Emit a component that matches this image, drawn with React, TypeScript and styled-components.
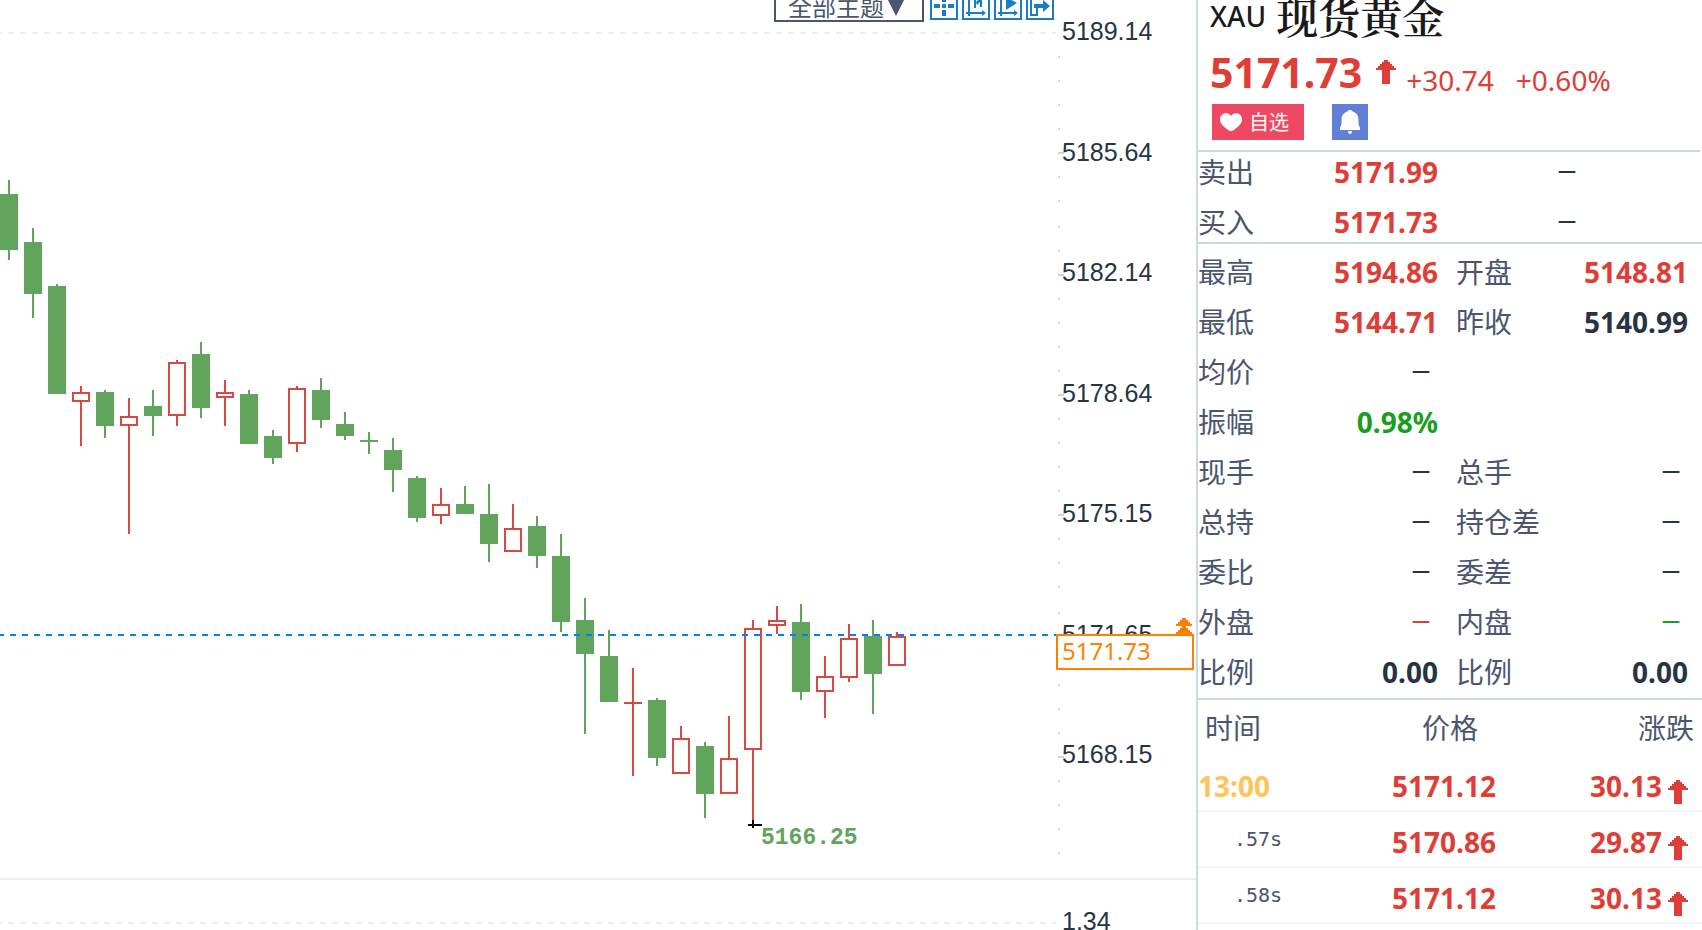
import React from 'react';
import styled, { createGlobalStyle } from 'styled-components';

const color = {
  ink: '#263444',
  label: '#4a5670',
  rule: '#cdd7df',
  faint: '#eaeff4',
  row: '#f4f5f6',
  up: '#de3e35',
  down: '#199e22',
  candleUp: '#d64a42',
  candleDown: '#61a55d',
  accent: '#ff8000',
  tool: '#1a7cc9',
};

const cjk = '"Noto Sans CJK SC", sans-serif';
const numeric = '"Noto Sans", "Noto Sans CJK SC", sans-serif';

const GlobalStyle = createGlobalStyle`
  *, *::before, *::after { box-sizing: border-box; }
  body { margin: 0; background: #fff; color: ${color.ink}; font-family: ${numeric}; }
`;

const Page = styled.main`
  display: grid;
  grid-template-columns: minmax(0, 1fr) 506px;
  height: 100vh;
  overflow: hidden;
`;

/* ---------- chart ---------- */

const ChartArea = styled.section`
  display: flex;
  flex-direction: column;
  min-height: 0;
`;

const MainPane = styled.div`
  display: grid;
  grid-template-columns: minmax(0, 1fr) 140px;
  flex: none;
  height: 880px;
  border-bottom: 2px solid ${color.faint};
`;

const SubPane = styled.div`
  display: grid;
  grid-template-columns: minmax(0, 1fr) 140px;
  flex: none;
  height: 86px;
`;

const Plot = styled.div`
  position: relative;
  min-width: 0;
`;

const Canvas = styled.svg`
  display: block;
  width: 100%;
  height: 100%;
  shape-rendering: crispEdges;
`;

const LowLabel = styled.text`
  font: 700 23px "Liberation Mono", monospace;
  fill: ${color.candleDown};
`;

const Toolbar = styled.div`
  position: absolute;
  top: -10px;
  right: 2px;
  display: flex;
  align-items: center;
  gap: 4px;
`;

const ThemePicker = styled.label`
  position: relative;
  display: block;
  margin-right: 2px;
`;

const ThemeSelect = styled.select`
  appearance: none;
  display: block;
  width: 150px;
  height: 32px;
  padding: 0 0 0 12px;
  border: 2px solid ${color.label};
  border-radius: 0;
  background: #fff;
  color: ${color.label};
  font: 400 24px/28px ${cjk};
`;

const Caret = styled.svg`
  position: absolute;
  right: 18px;
  top: 6px;
  pointer-events: none;
`;

const ToolButton = styled.button`
  display: block;
  width: 28px;
  height: 28px;
  padding: 0;
  border: 2px solid ${color.tool};
  background: #fff;
  color: ${color.tool};
  svg { display: block; }
`;

const Axis = styled.div`
  position: relative;
  display: grid;
  grid-template-columns: 6px 1fr;
`;

const AxisLabels = styled.ol`
  display: flex;
  flex-direction: column;
  justify-content: space-between;
  height: 753px;
  margin: 16px 0 0;
  padding: 0;
  list-style: none;
`;

const AxisLabel = styled.li`
  height: 30px;
  font: 25px/30px "Liberation Sans", sans-serif;
`;

const SubLabel = styled.div`
  padding: 26px 0 0 6px;
  font: 25px/30px "Liberation Sans", sans-serif;
`;

const PriceMarker = styled.div`
  position: absolute;
  top: 618px;
  left: 0;
  right: 2px;
  display: flex;
  flex-direction: column;
  align-items: flex-end;
  svg { display: block; margin-right: 2px; }
`;

const PriceTag = styled.div`
  width: 100%;
  height: 36px;
  padding-left: 4px;
  border: 2px solid ${color.accent};
  background: #fff;
  color: ${color.accent};
  font: 24px/30px ${numeric};
`;

/* ---------- quote panel ---------- */

const Panel = styled.aside`
  display: flex;
  flex-direction: column;
  border-left: 2px solid ${color.rule};
  min-height: 0;
`;

const Summary = styled.header`
  flex: none;
  height: 152px;
  margin-right: 2px;
  padding-left: 12px;
  border-bottom: 2px solid ${color.rule};
`;

const TitleRow = styled.h1`
  display: flex;
  align-items: center;
  gap: 10px;
  height: 36px;
  margin: 0;
  padding-bottom: 4px;
  color: #1a1a1a;
`;

const Ticker = styled.span`
  font: 500 28px/36px ${numeric};
`;

const Name = styled.span`
  font: 600 42px/36px "Noto Serif CJK SC", SimSun, ${cjk};
`;

const PriceRow = styled.div`
  display: flex;
  align-items: center;
  height: 68px;
  padding-top: 4px;
  color: ${color.up};
`;

const Price = styled.strong`
  margin-right: 14px;
  font: 700 41px/60px ${numeric};
`;

const Change = styled.span`
  margin-left: 22px;
  padding-top: 16px;
  font: 28px/28px ${numeric};
  &:first-of-type { margin-left: 10px; }
`;

const Actions = styled.div`
  display: flex;
  gap: 28px;
  padding-left: 2px;
`;

const ActionButton = styled.button<{ $fill: string; $width: number }>`
  display: flex;
  align-items: center;
  gap: 7px;
  width: ${(p) => p.$width}px;
  height: 36px;
  padding: 0 8px;
  border: 0;
  background: ${(p) => p.$fill};
  color: #fff;
  font: 20px/36px ${cjk};
  svg { flex: none; }
`;

const Section = styled.dl<{ $top?: number; $bottom?: number }>`
  display: flex;
  flex: none;
  flex-direction: column;
  gap: 10px;
  margin: 0;
  padding: ${(p) => p.$top ?? 0}px 14px ${(p) => p.$bottom ?? 0}px 0;
  border-bottom: 2px solid ${color.rule};
`;

const Row = styled.div`
  display: grid;
  grid-template-columns: 240px 1fr;
  column-gap: 18px;
  height: 40px;
`;

const Pair = styled.div`
  display: flex;
  justify-content: space-between;
`;

const Term = styled.dt`
  color: ${color.label};
  font: 400 28px/38px ${cjk};
`;

type Tone = 'ink' | 'up' | 'down';

const Value = styled.dd<{ $tone: Tone }>`
  margin: 0;
  color: ${(p) => color[p.$tone]};
  font: 700 28px/40px ${numeric};
`;

const Blank = styled(Value)`
  padding-right: 8px;
  font: 700 18px/36px ${numeric};
`;

const Volume = styled(Blank)`
  padding-left: 102px;
`;

const Ticks = styled.table`
  width: 100%;
  flex: none;
  border-collapse: separate;
  border-spacing: 0;
  table-layout: fixed;
`;

const HeadCell = styled.th<{ $align: string; $pad: string }>`
  height: 56px;
  padding: ${(p) => p.$pad};
  color: ${color.label};
  font: 400 28px/38px ${cjk};
  text-align: ${(p) => p.$align};
`;

const Cell = styled.td<{ $align: string; $pad: string }>`
  height: 56px;
  padding: ${(p) => p.$pad};
  border-bottom: 2px solid ${color.row};
  color: ${color.up};
  font: 700 28px/40px ${numeric};
  text-align: ${(p) => p.$align};
  white-space: nowrap;
`;

const Minute = styled.span`
  color: #ffc457;
`;

const Second = styled.span`
  display: block;
  padding: 0 0 6px 36px;
  color: ${color.label};
  font: 400 20px/34px "DejaVu Sans Mono", monospace;
`;

const Delta = styled.span`
  display: flex;
  align-items: center;
  justify-content: flex-end;
  gap: 6px;
  svg { margin-top: 12px; }
`;

const ArrowIcon = styled.svg`
  display: block;
  flex: none;
`;

/* ---------- data ---------- */

/* high, low, body top, body bottom (plot pixels) and direction */
type Candle = [number, number, number, number, 'u' | 'd'];

const candles: Candle[] = [
  [180, 260, 194, 250, 'd'],
  [228, 318, 242, 294, 'd'],
  [284, 394, 286, 394, 'd'],
  [386, 446, 392, 402, 'u'],
  [390, 438, 392, 426, 'd'],
  [398, 534, 416, 426, 'u'],
  [390, 436, 406, 416, 'd'],
  [360, 426, 362, 416, 'u'],
  [342, 418, 354, 408, 'd'],
  [380, 426, 392, 398, 'u'],
  [390, 444, 394, 444, 'd'],
  [430, 464, 436, 458, 'd'],
  [386, 452, 388, 444, 'u'],
  [378, 428, 390, 420, 'd'],
  [412, 440, 424, 436, 'd'],
  [432, 454, 440, 442, 'd'],
  [438, 492, 450, 470, 'd'],
  [476, 522, 478, 518, 'd'],
  [488, 524, 504, 516, 'u'],
  [486, 514, 504, 514, 'd'],
  [484, 562, 514, 544, 'd'],
  [504, 552, 528, 552, 'u'],
  [516, 568, 526, 556, 'd'],
  [534, 632, 556, 622, 'd'],
  [598, 734, 620, 654, 'd'],
  [630, 702, 656, 702, 'd'],
  [668, 776, 702, 704, 'u'],
  [698, 766, 700, 758, 'd'],
  [726, 774, 738, 774, 'u'],
  [742, 818, 746, 794, 'd'],
  [716, 794, 758, 794, 'u'],
  [620, 824, 628, 750, 'u'],
  [606, 634, 620, 626, 'u'],
  [604, 700, 622, 692, 'd'],
  [656, 718, 676, 692, 'u'],
  [624, 682, 638, 678, 'u'],
  [620, 714, 636, 674, 'd'],
  [632, 666, 636, 666, 'u'],
];

const axisPrices = ['5189.14', '5185.64', '5182.14', '5178.64', '5175.15', '5171.65', '5168.15'];

const axisTicks = Array.from({ length: 34 }, (_, i) => i + 1).map((k) => ({
  y: 2 * Math.round((32 + 24.13 * k) / 2),
  major: k % 5 === 0,
}));

type Entry = { term: string; value?: string; tone?: Tone };

const quoteRows: Entry[][] = [
  [{ term: '最高', value: '5194.86', tone: 'up' }, { term: '开盘', value: '5148.81', tone: 'up' }],
  [{ term: '最低', value: '5144.71', tone: 'up' }, { term: '昨收', value: '5140.99' }],
  [{ term: '均价' }],
  [{ term: '振幅', value: '0.98%', tone: 'down' }],
  [{ term: '现手' }, { term: '总手' }],
  [{ term: '总持' }, { term: '持仓差' }],
  [{ term: '委比' }, { term: '委差' }],
  [{ term: '外盘', tone: 'up' }, { term: '内盘', tone: 'down' }],
  [{ term: '比例', value: '0.00' }, { term: '比例', value: '0.00' }],
];

const trades = [
  { minute: '13:00', price: '5171.12', change: '30.13' },
  { second: '.57s', price: '5170.86', change: '29.87' },
  { second: '.58s', price: '5171.12', change: '30.13' },
];

/* ---------- drawings ---------- */

const UpArrow = () => (
  <ArrowIcon width="20" height="24" viewBox="0 0 20 24" aria-hidden="true">
    <path
      fill={color.up}
      d="M8 0h4v2h2v2h2v2h2v2h2v2h-6v14H6V10H0V8h2V6h2V4h2V2h2z"
    />
  </ArrowIcon>
);

const CandleShape = ({ index, data }: { index: number; data: Candle }) => {
  const [high, low, top, bottom, dir] = data;
  const x = index * 24;
  const mid = x + 8;
  if (dir === 'd') {
    return (
      <g fill={color.candleDown}>
        <rect x={mid} y={high} width={2} height={low - high} />
        <rect x={x} y={top} width={18} height={bottom - top} />
      </g>
    );
  }
  const flat = bottom - top <= 2;
  return (
    <g fill={color.candleUp}>
      <rect x={mid} y={high} width={2} height={top - high} />
      <rect x={mid} y={bottom} width={2} height={low - bottom} />
      {flat ? (
        <rect x={x} y={top} width={18} height={2} />
      ) : (
        <rect
          x={x + 1}
          y={top + 1}
          width={16}
          height={bottom - top - 2}
          fill="none"
          stroke={color.candleUp}
          strokeWidth={2}
        />
      )}
    </g>
  );
};

const tools: { name: string; path: string }[] = [
  { name: '十字光标', path: 'M2 10h6v4H2z M16 10h6v4h-6z M10 2h4v6h-4z M10 16h4v6h-4z M10 10h4v4h-4z' },
  { name: '坐标', path: 'M4 2h2v16h12v-2l4 3-4 3v-2H6v2H4v-2H2v-2h2z M10 3h2v11h-2z M12 8l4-4h2v9h-2V8l-3 3z' },
  { name: '播放', path: 'M4 2h2v16h12v-2l4 3-4 3v-2H6v2H4v-2H2v-2h2z M10 3l11 6-11 7z' },
  { name: '导出', path: 'M2 2h2v18h4v-6h2v8H2z M6 10h9V6l7 6-7 6v-4H6z' },
];

const Entries = ({ entry }: { entry: Entry }) => (
  <Pair>
    <Term>{entry.term}</Term>
    {entry.value ? (
      <Value $tone={entry.tone ?? 'ink'}>{entry.value}</Value>
    ) : (
      <Blank $tone={entry.tone ?? 'ink'}>—</Blank>
    )}
  </Pair>
);

export default function App() {
  return (
    <>
      <GlobalStyle />
      <Page>
        <ChartArea>
          <MainPane>
            <Plot>
              <Canvas>
                <line x1="-4" x2="100%" y1="33" y2="33" stroke={color.faint} strokeWidth="2" strokeDasharray="6 6" />
                {candles.map((c, i) => (
                  <CandleShape key={i} index={i} data={c} />
                ))}
                <line x1="-2" x2="100%" y1="635" y2="635" stroke="#0080ff" strokeWidth="2" strokeDasharray="6 6" />
                <path d="M748 824h4v-4h2v4h8v2h-8v2h-2v-2h-4z" fill="#000" />
                <LowLabel x="761" y="844">5166.25</LowLabel>
              </Canvas>
              <Toolbar>
                <ThemePicker>
                  <ThemeSelect aria-label="主题">
                    <option>全部主题</option>
                  </ThemeSelect>
                  <Caret width="20" height="20" viewBox="0 0 20 20" aria-hidden="true">
                    <path d="M0 0h20L10 20z" fill={color.label} />
                  </Caret>
                </ThemePicker>
                {tools.map((t) => (
                  <ToolButton key={t.name} type="button" aria-label={t.name}>
                    <svg width="24" height="24" viewBox="0 0 24 24">
                      <path d={t.path} fill="currentColor" />
                    </svg>
                  </ToolButton>
                ))}
              </Toolbar>
            </Plot>
            <Axis>
              <Canvas overflow="visible">
                {axisTicks.map((t) => (
                  <rect key={t.y} x={2} y={t.y} width={t.major ? 6 : 2} height={2} fill="#cdd4dc" />
                ))}
              </Canvas>
              <AxisLabels>
                {axisPrices.map((p) => (
                  <AxisLabel key={p}>{p}</AxisLabel>
                ))}
              </AxisLabels>
              <PriceMarker>
                <svg width="16" height="16" viewBox="0 0 16 16" aria-hidden="true">
                  <path
                    fill={color.accent}
                    d="M6 0h4v2h2v2h2v2h2v2h-6v2h2v2h2v2h2v2H0v-2h2v-2h2v-2h2V8H0V6h2V4h2V2h2z"
                  />
                </svg>
                <PriceTag>5171.73</PriceTag>
              </PriceMarker>
            </Axis>
          </MainPane>
          <SubPane>
            <Canvas>
              <line x1="-4" x2="100%" y1="43" y2="43" stroke={color.faint} strokeWidth="2" strokeDasharray="6 6" />
            </Canvas>
            <SubLabel>1.34</SubLabel>
          </SubPane>
        </ChartArea>

        <Panel>
          <Summary>
            <TitleRow>
              <Ticker>XAU</Ticker>
              <Name>现货黄金</Name>
            </TitleRow>
            <PriceRow>
              <Price>5171.73</Price>
              <UpArrow />
              <Change>+30.74</Change>
              <Change>+0.60%</Change>
            </PriceRow>
            <Actions>
              <ActionButton type="button" $fill="#ef4862" $width={92}>
                <svg width="22" height="18" viewBox="0 0 22 18" aria-hidden="true">
                  <path
                    fill="#fff"
                    d="M11 3C9 0 6 0 4 0.6 1 1.600 0 4 0 6.500 0 11 5 15 9 17.500c1.300 0.700 2.700 0.700 4 0C17 15 22 11 22 6.500 22 4 21 1.600 18 0.600 16 0 13 0 11 3z"
                  />
                </svg>
                自选
              </ActionButton>
              <ActionButton type="button" aria-label="提醒" $fill="#627fd8" $width={36}>
                <svg width="20" height="24" viewBox="0 0 20 24" aria-hidden="true">
                  <path
                    fill="#fff"
                    d="M10 0c1.500 0 2.200 0.600 2.600 1.400C16.500 2.600 18.500 5.500 18.500 9.500V14l1.500 4v2H0v-2l1.500-4V9.500c0-4 2-6.900 5.900-8.100C7.800 0.600 8.500 0 10 0z M8 21h4c0 2-0.800 3-2 3s-2-1-2-3z"
                  />
                </svg>
              </ActionButton>
            </Actions>
          </Summary>

          <Section>
            {[
              { term: '卖出', value: '5171.99' },
              { term: '买入', value: '5171.73' },
            ].map((r) => (
              <Row key={r.term}>
                <Pair>
                  <Term>{r.term}</Term>
                  <Value $tone="up">{r.value}</Value>
                </Pair>
                <Volume $tone="ink">—</Volume>
              </Row>
            ))}
          </Section>

          <Section $top={8} $bottom={6}>
            {quoteRows.map((row) => (
              <Row key={row[0].term}>
                {row.map((entry, i) => (
                  <Entries key={i} entry={entry} />
                ))}
              </Row>
            ))}
          </Section>

          <Ticks>
            <thead>
              <tr>
                <HeadCell scope="col" $align="left" $pad="0 0 2px 7px">时间</HeadCell>
                <HeadCell scope="col" $align="center" $pad="0 0 2px">价格</HeadCell>
                <HeadCell scope="col" $align="right" $pad="0 8px 2px 0">涨跌</HeadCell>
              </tr>
            </thead>
            <tbody>
              {trades.map((t) => (
                <tr key={t.minute ?? t.second}>
                  <Cell $align="left" $pad="6px 0 0">
                    {t.minute ? <Minute>{t.minute}</Minute> : <Second>{t.second}</Second>}
                  </Cell>
                  <Cell $align="right" $pad="6px 38px 0 0">{t.price}</Cell>
                  <Cell $align="right" $pad="6px 14px 0 0">
                    <Delta>
                      {t.change}
                      <UpArrow />
                    </Delta>
                  </Cell>
                </tr>
              ))}
            </tbody>
          </Ticks>
        </Panel>
      </Page>
    </>
  );
}
